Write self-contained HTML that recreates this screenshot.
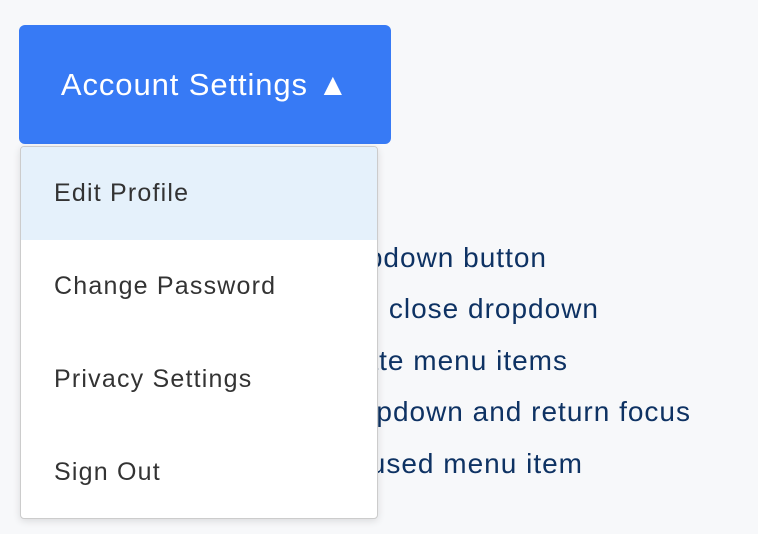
<!DOCTYPE html>
<html><head><style>
body{margin:0;width:758px;height:534px;background:#f7f8fa;font-family:"Liberation Sans",sans-serif;position:relative;overflow:hidden}
.bg{position:absolute;white-space:nowrap;font-size:28px;color:#0e3263;text-align:right;letter-spacing:1px}
.btn{position:absolute;left:19px;top:25px;width:372px;height:119px;background:#377af5;border-radius:6px;color:#fff;font-size:31px;line-height:119px;text-align:center;letter-spacing:0.9px}
.menu{position:absolute;left:20px;top:146px;width:356px;height:371px;background:#fff;border:1px solid #ccc;border-radius:4px;box-shadow:0 2px 8px rgba(0,0,0,.12);overflow:hidden}
.it{height:93px;line-height:93px;padding-left:33px;font-size:25px;color:#333;letter-spacing:1.2px}
.hl{background:#e5f1fb}
</style></head><body>
<div class="bg" style="right:211px;top:242px">Tab to the dropdown button</div>
<div class="bg" style="right:159px;top:293px">Escape to close dropdown</div>
<div class="bg" style="right:190px;top:345px">Arrows navigate menu items</div>
<div class="bg" style="right:67px;top:396px">Close dropdown and return focus</div>
<div class="bg" style="right:175px;top:448px">Enter activates focused menu item</div>
<div class="btn">Account Settings ▲</div>
<div class="menu">
<div class="it hl">Edit Profile</div>
<div class="it">Change Password</div>
<div class="it">Privacy Settings</div>
<div class="it">Sign Out</div>
</div>
</body></html>
